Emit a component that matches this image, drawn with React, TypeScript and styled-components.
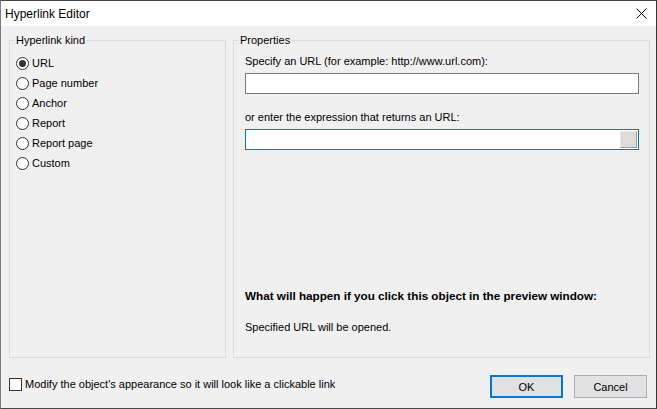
import React from "react";
import styled, { createGlobalStyle } from "styled-components";

const GlobalStyle = createGlobalStyle`
  html, body {
    margin: 0;
    padding: 0;
    background: #f0f0f0;
  }
  body {
    font-family: "Liberation Sans", Arial, sans-serif;
    font-size: 11px;
    color: #000;
  }
  * {
    box-sizing: border-box;
  }
`;

const Window = styled.div`
  width: 657px;
  height: 409px;
  display: flex;
  flex-direction: column;
  background: #f0f0f0;
  border: 1px solid #474747;
  border-left-color: #7a7a7a;
  border-right-color: #333;
`;

const TitleBar = styled.div`
  height: 25px;
  flex: none;
  display: flex;
  align-items: center;
  justify-content: space-between;
  background: #fff;
  padding: 0 9px 0 4px;
`;

const Title = styled.span`
  font-size: 12px;
  line-height: 14px;
`;

const CloseIcon = styled.svg`
  width: 11px;
  height: 11px;
  display: block;
`;

const Body = styled.div`
  display: flex;
  gap: 7px;
  padding: 7px 6px 0 8px;
`;

const Group = styled.fieldset<{ $width: number }>`
  width: ${({ $width }) => $width}px;
  height: 325px;
  margin: 0;
  padding: 6px 5px 0;
  min-width: 0;
  border: 1px solid #dcdcdc;
`;

const Legend = styled.legend`
  padding: 0 1px;
  line-height: 14px;
`;

const RadioList = styled.div`
  display: flex;
  flex-direction: column;
  margin-left: 1px;
`;

const RadioRow = styled.label`
  display: flex;
  align-items: center;
  gap: 3px;
  height: 20px;
`;

const RadioCircle = styled.span<{ $checked?: boolean }>`
  width: 13px;
  height: 13px;
  border-radius: 50%;
  border: 1px solid #333;
  background: #fff;
  display: flex;
  align-items: center;
  justify-content: center;

  &::after {
    content: "";
    width: 7px;
    height: 7px;
    border-radius: 50%;
    background: #333;
    display: ${({ $checked }) => ($checked ? "block" : "none")};
  }
`;

const PropsBody = styled.div`
  display: flex;
  flex-direction: column;
  padding: 1px 5px 0 6px;
`;

const FieldLabel = styled.div<{ $top?: number }>`
  line-height: 14px;
  margin-top: ${({ $top }) => $top ?? 0}px;
`;

const TextBox = styled.div<{ $focused?: boolean }>`
  height: 21px;
  margin-top: 5px;
  display: flex;
  justify-content: flex-end;
  align-items: center;
  padding: 1px;
  background: #fff;
  border: 1px solid ${({ $focused }) => ($focused ? "#0078d7" : "#7a7a7a")};
`;

const EllipsisButton = styled.span`
  width: 17px;
  height: 17px;
  background: #dcdcdc;
  border: 1px solid;
  border-color: #e8e8e8 #a0a0a0 #a0a0a0 #e8e8e8;
`;

const InfoTitle = styled.div`
  font-size: 11.7px;
  font-weight: bold;
  line-height: 14px;
  margin-top: 139px;
`;

const InfoText = styled.div`
  line-height: 14px;
  margin-top: 17px;
`;

const Footer = styled.div`
  display: flex;
  align-items: flex-start;
  padding: 17px 9px 0 8px;
`;

const CheckRow = styled.label`
  display: flex;
  align-items: center;
  gap: 3px;
  line-height: 14px;
  margin-top: 2px;
`;

const CheckBox = styled.span`
  width: 13px;
  height: 13px;
  border: 1px solid #333;
  background: #fff;
`;

const Buttons = styled.div`
  margin-left: auto;
  display: flex;
  gap: 11px;
`;

const Button = styled.button<{ $default?: boolean }>`
  width: 73px;
  height: 23px;
  padding: 0;
  font: inherit;
  color: #000;
  background: #e1e1e1;
  border: ${({ $default }) => ($default ? "2px solid #0078d7" : "1px solid #adadad")};
`;

const kinds = ["URL", "Page number", "Anchor", "Report", "Report page", "Custom"];

export default function App() {
  return (
    <>
      <GlobalStyle />
      <Window>
        <TitleBar>
          <Title>Hyperlink Editor</Title>
          <CloseIcon viewBox="0 0 11 11">
            <path d="M0.5 0.5 L10.5 10.5 M10.5 0.5 L0.5 10.5" stroke="#000" strokeWidth="1" />
          </CloseIcon>
        </TitleBar>
        <Body>
          <Group $width={217}>
            <Legend>Hyperlink kind</Legend>
            <RadioList>
              {kinds.map((kind, i) => (
                <RadioRow key={kind}>
                  <RadioCircle $checked={i === 0} />
                  {kind}
                </RadioRow>
              ))}
            </RadioList>
          </Group>
          <Group $width={417}>
            <Legend>Properties</Legend>
            <PropsBody>
              <FieldLabel>Specify an URL (for example: http://www.url.com):</FieldLabel>
              <TextBox />
              <FieldLabel $top={16}>or enter the expression that returns an URL:</FieldLabel>
              <TextBox $focused>
                <EllipsisButton />
              </TextBox>
              <InfoTitle>What will happen if you click this object in the preview window:</InfoTitle>
              <InfoText>Specified URL will be opened.</InfoText>
            </PropsBody>
          </Group>
        </Body>
        <Footer>
          <CheckRow>
            <CheckBox />
            Modify the object's appearance so it will look like a clickable link
          </CheckRow>
          <Buttons>
            <Button $default>OK</Button>
            <Button>Cancel</Button>
          </Buttons>
        </Footer>
      </Window>
    </>
  );
}
